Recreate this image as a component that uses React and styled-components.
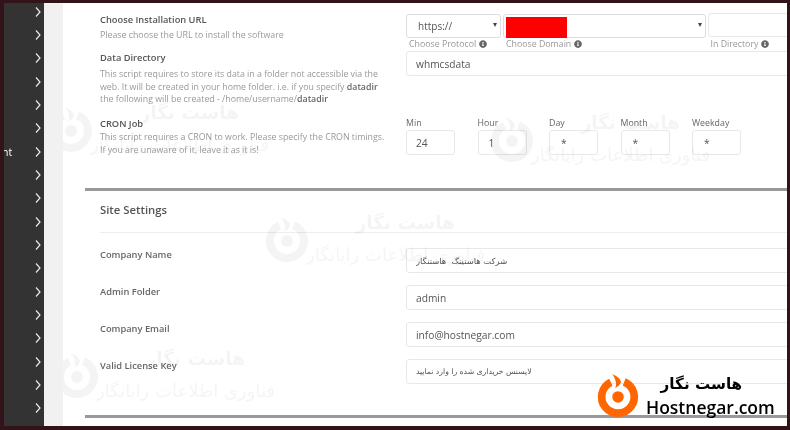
import React from 'react';
import styled, { createGlobalStyle } from 'styled-components';
import { FaInfoCircle } from 'react-icons/fa';

const GlobalStyle = createGlobalStyle`
	html, body {
		margin: 0;
		padding: 0;
		background: #33131a;
	}
	* {
		box-sizing: border-box;
	}
`;

const Frame = styled.div`
	width: 790px;
	height: 430px;
	padding: 3px 3px 4px 4px;
	display: flex;
	overflow: hidden;
	background: #33131a;
	font-family: 'Open Sans', sans-serif;
	filter: blur(0.3px);
`;

const Sidebar = styled.nav`
	width: 40px;
	flex: none;
	background: #333;
	overflow: hidden;
`;

const SideList = styled.div`
	margin-top: -3px;
`;

const SideRow = styled.div`
	height: 23.33px;
	display: flex;
	align-items: center;
	justify-content: space-between;
	padding-right: 3px;
	color: #fff;
	font-size: 10.5px;
	span {
		margin-left: -2px;
	}
	svg {
		margin-left: auto;
	}
`;

const Strip = styled.div`
	width: 19px;
	flex: none;
	background: #f1f1f1;
`;

const Main = styled.main`
	flex: 1;
	position: relative;
	background: #fff;
	overflow: hidden;
	padding: 10px 0 0 22px;
`;

const Block = styled.section`
	display: grid;
	grid-template-columns: 306px 1fr;
	padding-left: 15px;
	height: ${(p) => p.$height}px;
`;

const Title = styled.div`
	font-size: 9.3px;
	line-height: 14px;
	font-weight: 600;
	color: #555;
	margin-bottom: ${(p) => p.$gap || 0}px;
`;

const Desc = styled.p`
	margin: 0;
	max-width: 288px;
	font-size: 8.8px;
	line-height: 12.5px;
	color: #999;
	b {
		color: #666;
		font-weight: 600;
	}
`;

const Divider = styled.hr`
	margin: ${(p) => p.$top || 0}px 0 0;
	border: 0;
	height: 3px;
	background: #999;
`;

const SiteHeading = styled.h2`
	margin: 0 0 15px 15px;
	height: 42px;
	padding-top: 9px;
	font-size: 11.3px;
	line-height: 20px;
	font-weight: 600;
	color: #555;
	border-bottom: 1px solid #eee;
`;

const UrlRow = styled.div`
	display: grid;
	grid-template-columns: 97px 204.5px 1fr;
	margin-right: -10px;
`;

const UrlCell = styled.div`
	position: relative;
	padding-right: 2px;
`;

const SelectWrap = styled.div`
	position: relative;
	height: 24px;
	&::after {
		content: '';
		position: absolute;
		top: 10px;
		right: 4px;
		border-left: 2.5px solid transparent;
		border-right: 2.5px solid transparent;
		border-top: 4px solid #444;
	}
`;

const Select = styled.select`
	appearance: none;
	width: 100%;
	height: 24px;
	padding: 0 0 0 11px;
	background: #fff;
	border: 1px solid #ddd;
	border-radius: 3px;
	font: 10px 'Open Sans', sans-serif;
	color: #555;
`;

const Masked = styled.div`
	position: absolute;
	top: 4px;
	left: 2.5px;
	width: 61px;
	height: 21px;
	background: #f00;
`;

const Hint = styled.div`
	display: flex;
	align-items: center;
	gap: 3px;
	height: 14px;
	padding-left: ${(p) => p.$indent}px;
	font-size: 8.8px;
	color: #999;
	svg {
		color: #666;
	}
`;

const Field = styled.input`
	display: block;
	width: ${(p) => p.$width || 'calc(100% + 10px)'};
	height: ${(p) => p.$high || 25}px;
	padding: 0 0 0 ${(p) => p.$indent || 9}px;
	border: 1px solid #e8e8e8;
	border-radius: 3px;
	background: transparent;
	outline: none;
	font: ${(p) => (p.$arabic ? `${p.$arabic}px 'DejaVu Sans'` : "10.2px 'Open Sans'")}, sans-serif;
	color: #555;
`;

const CronRow = styled.div`
	display: flex;
	gap: 22.5px;
`;

const CronField = styled.label`
	display: block;
	width: 49px;
	font-size: 8.8px;
	line-height: 13px;
	color: #666;
	white-space: nowrap;
`;

const SiteRow = styled.div`
	display: grid;
	grid-template-columns: 306px 1fr;
	padding-left: 15px;
	height: 37px;
`;

const SiteLabel = styled.div`
	font-size: 9.3px;
	line-height: 14px;
	font-weight: 600;
	color: #666;
`;

const Overlay = styled.div`
	position: absolute;
	left: ${(p) => p.$x}px;
	top: ${(p) => p.$y}px;
	pointer-events: none;
`;

const WatermarkBox = styled(Overlay)`
	width: 230px;
	height: 60px;
	opacity: 0.04;
	color: #000;
	font-family: 'DejaVu Sans', sans-serif;
	font-weight: 700;
	svg {
		position: absolute;
		left: 0;
		top: 4px;
	}
`;

const WmName = styled.div`
	position: absolute;
	left: 92px;
	top: 0;
	width: 100px;
	display: flex;
	justify-content: flex-end;
	font-size: 18.5px;
	line-height: 24px;
	white-space: nowrap;
`;

const WmSub = styled.div`
	position: absolute;
	left: 47px;
	top: 33px;
	width: 175px;
	display: flex;
	justify-content: flex-end;
	font-size: 18px;
	line-height: 22px;
	font-weight: 400;
	white-space: nowrap;
`;

const Badge = styled(Overlay)`
	display: flex;
	align-items: center;
	gap: 5px;
`;

const BadgeText = styled.div`
	display: flex;
	flex-direction: column;
	align-items: center;
	color: #000;
	white-space: nowrap;
`;

const BadgeName = styled.div`
	margin-right: 18px;
	font: 700 15.2px/23px 'DejaVu Sans', sans-serif;
`;

const BadgeSite = styled.div`
	font: 600 17.5px/22px 'Open Sans', sans-serif;
`;

const Chevron = () => (
	<svg width="6" height="10" viewBox="0 0 6 10" fill="none" stroke="#e8e8e8" strokeWidth="1.2">
		<path d="M1 .5 5 5 1 9.5" />
	</svg>
);

const Logo = ({ size, color }) => (
	<svg width={size} height={size} viewBox="-22 -26 44 48">
		<path d="M6.5 -15.7A17 17 0 1 1 -7.5 -15.3" fill="none" stroke={color} strokeWidth="8" />
		<path d="M-6 -24C-2 -22 2 -20 3 -16C3 -13 0 -11 -3 -9C-1 -13 -2 -18 -6 -24Z" fill={color} />
		<circle cx="0" cy="0" r="6" fill={color} />
	</svg>
);

const Watermark = ({ x, y }) => (
	<WatermarkBox $x={x} $y={y}>
		<Logo size={48} color="#000" />
		<WmName>هاست نگار</WmName>
		<WmSub>فناوری اطلاعات رایانگار</WmSub>
	</WatermarkBox>
);

const cron = [
	['Min', '24', 9],
	['Hour', '1', 10],
	['Day', '*', 11],
	['Month', '*', 11],
	['Weekday', '*', 11],
];

const site = [
	['Company Name', 'شرکت هاستینگ  هاستنگار', 8.4],
	['Admin Folder', 'admin'],
	['Company Email', 'info@hostnegar.com'],
	['Valid License Key', 'لایسنس خریداری شده را وارد نمایید', 7.7],
];

export default function App() {
	return (
		<Frame>
			<GlobalStyle />
			<Sidebar>
				<SideList>
					{Array.from({ length: 18 }).map((_, i) => (
						<SideRow key={i}>
							{i === 6 && <span>nt</span>}
							<Chevron />
						</SideRow>
					))}
				</SideList>
			</Sidebar>
			<Strip />
			<Main>
				<Block $height={38}>
					<div>
						<Title $gap={2}>Choose Installation URL</Title>
						<Desc>Please choose the URL to install the software</Desc>
					</div>
					<UrlRow>
						<UrlCell>
							<SelectWrap>
								<Select defaultValue="https://">
									<option>https://</option>
								</Select>
							</SelectWrap>
							<Hint $indent={3}>
								Choose Protocol <FaInfoCircle size={8} />
							</Hint>
						</UrlCell>
						<UrlCell>
							<SelectWrap>
								<Select />
								<Masked />
							</SelectWrap>
							<Hint $indent={3}>
								Choose Domain <FaInfoCircle size={8} />
							</Hint>
						</UrlCell>
						<UrlCell>
							<Field readOnly $width="100%" $high={24} />
							<Hint $indent={3}>
								In Directory <FaInfoCircle size={8} />
							</Hint>
						</UrlCell>
					</UrlRow>
				</Block>
				<Block $height={66}>
					<div>
						<Title $gap={3}>Data Directory</Title>
						<Desc>
							This script requires to store its data in a folder not accessible via the web. It will be
							created in your home folder. i.e. if you specify <b>datadir</b> the following will be created
							- /home/username/<b>datadir</b>
						</Desc>
					</div>
					<div>
						<Field readOnly defaultValue="whmcsdata" />
					</div>
				</Block>
				<Block $height={71}>
					<div>
						<Title>CRON Job</Title>
						<Desc>
							This script requires a CRON to work. Please specify the CRON timings. If you are unaware of
							it, leave it as it is!
						</Desc>
					</div>
					<CronRow>
						{cron.map(([name, value, indent]) => (
							<CronField key={name}>
								{name}
								<Field readOnly defaultValue={value} $width="49px" $indent={indent} />
							</CronField>
						))}
					</CronRow>
				</Block>
				<Divider />
				<SiteHeading>Site Settings</SiteHeading>
				{site.map(([name, value, arabic]) => (
					<SiteRow key={name}>
						<SiteLabel>{name}</SiteLabel>
						<div>
							<Field readOnly defaultValue={value} $arabic={arabic} />
						</div>
					</SiteRow>
				))}
				<Divider $top={19} />
				<Watermark x={-16} y={98} />
				<Watermark x={425} y={108} />
				<Watermark x={200} y={208} />
				<Watermark x={-10} y={344} />
				<Badge $x={532} $y={369}>
					<Logo size={46} color="#f60" />
					<BadgeText>
						<BadgeName>هاست نگار</BadgeName>
						<BadgeSite>Hostnegar.com</BadgeSite>
					</BadgeText>
				</Badge>
			</Main>
		</Frame>
	);
}
